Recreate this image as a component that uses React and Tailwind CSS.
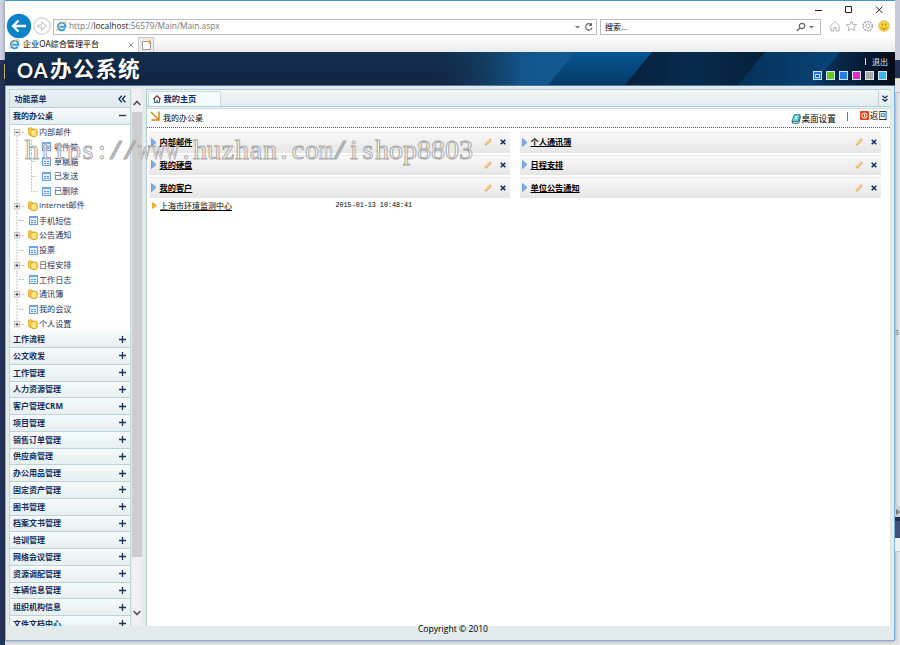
import React from "react";

const menus = [
  "工作流程", "公文收发", "工作管理", "人力资源管理", "客户管理CRM", "项目管理",
  "销售订单管理", "供应商管理", "办公用品管理", "固定资产管理", "图书管理",
  "档案文书管理", "培训管理", "网络会议管理", "资源调配管理", "车辆信息管理",
  "组织机构信息", "文件文档中心",
];

const tree = [
  { t: "内部邮件", k: "open" },
  { t: "收件箱", k: "child" },
  { t: "草稿箱", k: "child" },
  { t: "已发送", k: "child" },
  { t: "已删除", k: "child", last: true },
  { t: "Internet邮件", k: "folder" },
  { t: "手机短信", k: "leaf" },
  { t: "公告通知", k: "folder" },
  { t: "投票", k: "leaf" },
  { t: "日程安排", k: "folder" },
  { t: "工作日志", k: "leaf" },
  { t: "通讯簿", k: "folder" },
  { t: "我的会议", k: "leaf" },
  { t: "个人设置", k: "folder", last: true },
];

const IE = ({ className }) => (
  <svg className={className} viewBox="0 0 12 12">
    <path d="M9.700 8.200A4.200 4.200 0 1 1 10.300 6.300H3.600" fill="none" stroke="#2f9be0" strokeWidth="2" />
    <path d="M1.300 11.300C-.8 9.800 3.500 2.800 8.500.9c2.500-.8 3 .6 2.100 2.300" fill="none" stroke="#f0b63c" strokeWidth="1" />
  </svg>
);

const Folder = () => (
  <svg className="h-[10px] w-[10px] shrink-0" viewBox="0 0 10 10">
    <path d="M.5 1.200 3 .6l1.300 1.200 1.200.3V9.300L3 8.600.5 7.500z" fill="#f6cf4a" stroke="#d49b16" strokeWidth=".7" />
    <path d="M3 3l2-.8h3.200l1 .8v5.300l-1.200.9-2 .5L3 8.600z" fill="#ffdf63" stroke="#c9930f" strokeWidth=".8" />
    <path d="M4 3.600v4.600M6 3.300v5" stroke="#fff3b5" strokeWidth=".8" />
  </svg>
);

const Sheet = () => (
  <svg className="h-[9px] w-[9px] shrink-0" viewBox="0 0 9 9">
    <rect x=".5" y=".5" width="8" height="8" fill="#e8f2ff" stroke="#6a9fdf" />
    <path d="M0 1h9" stroke="#6aa5e6" strokeWidth="2" />
    <path d="M2 4.500h2M5 4.500h2M2 6.500h2M5 6.500h2" stroke="#5591d8" strokeWidth="1.100" />
  </svg>
);

function TreeRow({ item }) {
  const child = item.k === "child";
  return (
    <div className="flex h-[14.75px] items-center pl-[4px]">
      <svg className="h-[14.75px] w-[13px] shrink-0" viewBox="0 0 13 14.750">
        {!(item.k === "folder" && item.last) && (
          <path d={item.k === "open" ? "M3 8v7" : "M3 0v15"} stroke="#c4c4c4" strokeDasharray="2 1" />
        )}
        {item.k === "folder" && item.last && <path d="M3 0v7" stroke="#c4c4c4" strokeDasharray="2 1" />}
        {!child && <path d="M5 7.500h6" stroke="#c4c4c4" strokeDasharray="2 1" />}
        {(item.k === "folder" || item.k === "open") && (
          <g>
            <rect x="0.300" y="4.600" width="5.400" height="5.400" fill="#fff" stroke="#b5b5b5" strokeWidth=".8" />
            <path d={item.k === "folder" ? "M1.400 7.300h3.200M3 5.700v3.200" : "M1.400 7.300h3.200"} stroke="#222" strokeWidth=".9" />
          </g>
        )}
      </svg>
      {child && (
        <svg className="h-[14.75px] w-[15px] shrink-0" viewBox="0 0 15 14.750">
          <path d={item.last ? "M4.500 0v7.500h6" : "M4.500 0v15M4.500 7.500h6"} fill="none" stroke="#c4c4c4" strokeDasharray="2 1" />
        </svg>
      )}
      <span className={child ? "flex w-[12px]" : "flex w-[12px] justify-center"}>
        {item.k === "folder" || item.k === "open" ? <Folder /> : <Sheet />}
      </span>
      <span className="whitespace-nowrap text-[8.100px] leading-none text-[#1c3259]">
        {item.t.startsWith("Internet") ? <><span className="text-[7.900px]">Internet</span>邮件</> : item.t}
      </span>
    </div>
  );
}

function MenuHead({ label, open }) {
  return (
    <div className="flex h-[16.75px] shrink-0 items-center justify-between border-b border-[#b9d3da] bg-gradient-to-b from-[#f6fafa] to-[#e8eff0] pr-[4px] pl-[3px]">
      <span className="text-[8px] leading-none font-bold text-[#15305c]">{label}</span>
      <svg className="h-[7px] w-[7px]" viewBox="0 0 7 7">
        <path d={open ? "M0 3.500h7" : "M0 3.500h7M3.500 0v7"} stroke="#16315c" strokeWidth="1.300" />
      </svg>
    </div>
  );
}

function Panel({ title }) {
  return (
    <div className="flex h-[20.500px] items-center border-t border-[#e9e9e9] bg-gradient-to-b from-[#f9f9f9] to-[#e6e6e6] pr-[4.500px] pb-[1px] pl-[2px]">
      <svg className="h-[9px] w-[6px]" viewBox="0 0 6 9">
        <path d="M.5.5 5 4.500.5 8.500z" fill="#79abee" stroke="#5a8cd4" strokeWidth=".7" />
      </svg>
      <span className="ml-[2.500px] text-[8.200px] leading-none font-bold text-black underline">{title}</span>
      <svg className="ml-auto h-[8px] w-[8px]" viewBox="0 0 8 8">
        <path d="M1.200 6.800 6.500 1.500" stroke="#dfa548" strokeWidth="2.500" />
        <path d="M1.300 6.200 6 1.500" stroke="#ffe3a0" strokeWidth="1.200" />
        <path d="M6 .9l1.300 1.300" stroke="#e8a59a" strokeWidth="1.200" />
      </svg>
      <svg className="ml-[8px] h-[6px] w-[6px]" viewBox="0 0 6 6">
        <path d="M.7.7l4.600 4.600M5.300.7.7 5.300" stroke="#14305f" strokeWidth="1.600" />
      </svg>
    </div>
  );
}

function Watermark() {
  return (
    <div className="pointer-events-none absolute top-[134px] left-[25px] flex font-['Liberation_Serif',serif] text-[28px] leading-[32px] text-white/75 [-webkit-text-stroke:1px_#a9a9a9]">
      {"https://www.huzhan.com/ishop8803".split("").map((c, i) => (
        <span key={i} className="flex w-[14px] justify-center">
          <span className={c === "w" || c === "m" ? "scale-x-[0.66]" : c === "/" ? "scale-x-[1.5]" : ""}>{c}</span>
        </span>
      ))}
    </div>
  );
}

function Chrome() {
  return (
    <div className="flex h-[51px] flex-col bg-gradient-to-b from-white from-70% to-[#ebebeb]">
      <div className="flex h-[17px] items-center justify-end pr-[11px]">
        <svg className="h-[9px] w-[70px]" viewBox="0 0 70 9" fill="none" stroke="#222">
          <path d="M1 5.500h7M31.500 1.500h6v6h-6zM62 1.500l6.500 6.500M68.500 1.500 62 8" />
        </svg>
      </div>
      <div className="flex h-[17px] items-center">
        <svg className="z-10 -mt-[2px] h-[26px] w-[47px] shrink-0" viewBox="0 0 47 26">
          <circle cx="14" cy="13" r="12.200" fill="#0b82c8" />
          <path d="M21 13H8M13.500 7.500 8 13l5.500 5.500" fill="none" stroke="#fff" strokeWidth="2.300" />
          <circle cx="37" cy="13" r="8.200" fill="#fff" stroke="#c3c3c3" />
          <path d="M32.500 12h4V9l5 4-5 4v-3h-4z" fill="#fff" stroke="#bdbdbd" />
        </svg>
        <div className="ml-[1px] flex h-[16px] w-[544px] items-center border border-[#bcbcbc] bg-white px-[2px]">
          <IE className="h-[11px] w-[11px]" />
          <span className="ml-[2px] font-['Open_Sans',sans-serif] text-[8.350px] leading-none text-[#777]">
            http://<span className="text-[#222]">localhost</span>:56579/Main/Main.aspx
          </span>
          <svg className="ml-auto h-[10px] w-[20px]" viewBox="0 0 20 10">
            <path d="M1 4h5L3.500 6.500z" fill="#777" />
            <path d="M17 2.500a3.200 3.200 0 1 0 1 3" fill="none" stroke="#666" strokeWidth="1.200" />
            <path d="M18 .5v3.500h-3.500z" fill="#666" />
          </svg>
        </div>
        <div className="ml-[3px] flex h-[16px] w-[221px] items-center border border-[#bcbcbc] bg-white px-[4px]">
          <span className="text-[8px] leading-none text-black">搜索...</span>
          <svg className="ml-auto h-[10px] w-[20px]" viewBox="0 0 20 10">
            <circle cx="6" cy="4" r="2.700" fill="none" stroke="#666" strokeWidth="1.200" />
            <path d="M4 6 .8 9" stroke="#666" strokeWidth="1.400" />
            <path d="M13 4h5l-2.500 2.500z" fill="#777" />
          </svg>
        </div>
        <svg className="ml-[8px] h-[12px] w-[62px] -translate-y-[1px]" viewBox="0 0 62 12" fill="none" stroke="#a9a9a9" strokeWidth=".9">
          <path d="M1 6.500 6 1.500l5 5-1 .8V11H7.200V7.500H4.800V11H2V7.300z" />
          <path d="M22.500 1l1.500 3.400 3.800.3-2.900 2.500.9 3.600-3.300-2-3.300 2 .9-3.600-2.900-2.500 3.800-.3z" />
          <circle cx="38.700" cy="6" r="4.600" strokeDasharray="2 .9" strokeWidth="1.500" />
          <circle cx="38.700" cy="6" r="2" />
          <circle cx="55" cy="6" r="5.300" fill="#f9d342" stroke="#d6a625" strokeWidth=".6" />
          <path d="M53.300 3.700v1.800M56.700 3.700v1.800M52 7.500c1.500 2 4.500 2 6 0" stroke="#8a6510" />
        </svg>
      </div>
      <div className="mt-auto flex h-[15px]">
        <div className="flex w-[134px] items-center border-r border-[#c8c8c8] bg-white pr-[4px] pl-[4px]">
          <IE className="h-[11px] w-[11px]" />
          <span className="ml-[3px] text-[8.100px] leading-none text-black">企业OA综合管理平台</span>
          <svg className="ml-auto h-[6px] w-[6px]" viewBox="0 0 6 6">
            <path d="M.5.5l5 5M5.500.5l-5 5" stroke="#999" />
          </svg>
        </div>
        <div className="flex w-[15px] items-center justify-center border-t border-r border-[#c8c8c8] bg-[#ececec]">
          <svg className="h-[12px] w-[11px]" viewBox="0 0 11 12">
            <path d="M1.500 2.500h8v8h-8z" fill="#fff" stroke="#999" />
            <path d="M8.300 0l.8 2 1.900.8-1.900.8-.8 2-.8-2-2-.8 2-.8z" fill="#f6a33c" />
          </svg>
        </div>
      </div>
    </div>
  );
}

const swatches = ["bg-[#2678d8]", "bg-[#5fcb1d]", "bg-[#1f7cea]", "bg-[#de2cc6]", "bg-[#aaaaaa]", "bg-[#39b2f6]"];

function Banner() {
  return (
    <div className="relative flex h-[34px] shrink-0 justify-between overflow-hidden border-b border-[#53789d] bg-gradient-to-b from-[#12304f] to-[#122442]">
      <svg className="absolute inset-0 h-full w-full" viewBox="0 0 890 33" preserveAspectRatio="none">
        <defs>
          <linearGradient id="a" x1="0" x2="1">
            <stop offset="0" stopColor="#12304f" stopOpacity="0" />
            <stop offset=".6" stopColor="#12568c" />
            <stop offset="1" stopColor="#125a93" />
          </linearGradient>
          <linearGradient id="b" x1="0" x2="0" y1="0" y2="1">
            <stop offset="0" stopColor="#075493" />
            <stop offset="1" stopColor="#063a67" />
          </linearGradient>
          <linearGradient id="c" x1="0" x2="1">
            <stop offset="0" stopColor="#08213c" />
            <stop offset=".5" stopColor="#072b4d" />
            <stop offset="1" stopColor="#071e37" />
          </linearGradient>
          <linearGradient id="d" x1="0" x2="1">
            <stop offset="0" stopColor="#063158" />
            <stop offset="1" stopColor="#07457a" />
          </linearGradient>
          <linearGradient id="e" x1="0" x2="1">
            <stop offset="0" stopColor="#093661" />
            <stop offset="1" stopColor="#040b18" />
          </linearGradient>
        </defs>
        <path d="M445 0H580L550 33H425z" fill="url(#a)" />
        <path d="M570 0H660L625 33H543z" fill="url(#b)" />
        <path d="M647 0H762L735 33H620z" fill="url(#c)" />
        <path d="M760 0H840L810 33H733z" fill="url(#d)" />
        <path d="M835 0H890V33H808z" fill="url(#e)" />
      </svg>
      <div className="relative flex items-center pt-[1px] pl-[12px] text-white [text-shadow:1px_1px_1px_#0008]">
        <span className="w-[33px] pt-[2px] font-['Lato',sans-serif] text-[20px] leading-none font-bold tracking-[1px]">OA</span>
        <span className="text-[21.700px] leading-none font-bold tracking-[1px]">办公系统</span>
      </div>
      <div className="relative flex flex-col items-end pt-[5px] pr-[7px]">
        <div className="flex items-center gap-[6px] text-[8px] leading-[9px] text-[#dbe6f0]">
          <span className="h-[7px] w-px bg-[#dbe6f0]" />
          <span>退出</span>
        </div>
        <div className="mt-[5px] flex gap-[4px] pr-[1px]">
          {swatches.map((s, i) => (
            <div key={s} className={"flex h-[9px] w-[9px] items-center justify-center border border-[#dce5ea] " + s}>
              {i === 0 && <span className="h-[4px] w-[5px] border border-[#b8d6f6] bg-[#1b55ad]" />}
            </div>
          ))}
        </div>
      </div>
    </div>
  );
}

function Sidebar() {
  return (
    <div className="flex h-[537px] w-[133px] shrink-0">
      <div className="flex w-[122px] flex-col overflow-hidden border-x border-t border-[#bdd5dc] bg-white">
        <div className="flex h-[18px] shrink-0 items-center justify-between border-b border-[#b9d3da] bg-gradient-to-b from-[#eaf1f2] to-[#dfe9ec] pr-[4px] pl-[4.500px]">
          <span className="text-[8px] leading-none font-bold text-[#15305c]">功能菜单</span>
          <svg className="h-[8px] w-[8px]" viewBox="0 0 8 8">
            <path d="M3.800.7.9 4l2.900 3.300M7.300.7 4.400 4l2.900 3.300" fill="none" stroke="#16315c" strokeWidth="1.300" />
          </svg>
        </div>
        <MenuHead label="我的办公桌" open />
        <div className="flex shrink-0 flex-col">
          {tree.map((t) => <TreeRow key={t.t} item={t} />)}
        </div>
        {menus.map((m) => <MenuHead key={m} label={m} />)}
      </div>
      <div className="ml-[1px] flex w-[10px] flex-col items-center bg-[#f0f0f0] pt-[11px] pb-[10px]">
        <svg className="h-[6px] w-[8px] shrink-0" viewBox="0 0 8 6">
          <path d="M.7 5 4 1.500 7.300 5" fill="none" stroke="#555" strokeWidth="1.700" />
        </svg>
        <div className="mt-[6px] h-[445px] w-full shrink-0 bg-[#cdcdcd]" />
        <svg className="mt-auto h-[6px] w-[8px] shrink-0" viewBox="0 0 8 6">
          <path d="M.7 1 4 4.500 7.300 1" fill="none" stroke="#555" strokeWidth="1.700" />
        </svg>
      </div>
    </div>
  );
}

function Main() {
  return (
    <div className="ml-[4px] flex h-[537px] w-[745px] shrink-0 flex-col border-t border-r border-l border-[#b0cdd6] border-r-[#dbe5e8] bg-white">
      <div className="flex h-[17px] shrink-0 justify-between border-b border-[#b0cdd6] bg-gradient-to-b from-[#f1f6f6] to-[#e4ecee] pt-px pl-[1px]">
        <div className="flex w-[73px] items-center gap-[2.500px] rounded-t-[2px] border-x border-t border-[#c4dce1] bg-[#f5fafb] pl-[4px]">
          <svg className="h-[8px] w-[8px]" viewBox="0 0 8 8">
            <path d="M1.500 4v3.500h5V4" fill="#fff" stroke="#28529a" />
            <path d="M.4 4.200 4 .8l3.600 3.400" fill="none" stroke="#8c2731" strokeWidth="1.200" />
            <path d="M4 5v3" stroke="#3a73c2" strokeWidth="1.500" />
          </svg>
          <span className="text-[8.200px] leading-none font-bold text-[#15305c]">我的主页</span>
        </div>
        <div className="flex w-[12px] items-center justify-center border-l border-[#b9d3da]">
          <svg className="h-[7px] w-[6px]" viewBox="0 0 6 7">
            <path d="M.5.700 3 2.900 5.500.7M.5 3.900 3 6.100l2.500-2.200" fill="none" stroke="#16315c" strokeWidth="1.300" />
          </svg>
        </div>
      </div>
      <div className="h-[2px] shrink-0 border-b border-[#c7dbe0] bg-[#edf3f4]" />
      <div className="flex h-[19px] shrink-0 border-b border-dotted border-[#267a50] pr-[3px] pl-[3px] text-[8px] leading-none text-black">
        <svg className="mt-[2px] h-[10px] w-[10px]" viewBox="0 0 10 10">
          <path d="M1 1 8 8M9 .5V9H1.500" fill="none" stroke="#d97f10" strokeWidth="1.400" />
        </svg>
        <span className="mt-[5px] ml-[3px]">我的办公桌</span>
        <svg className="mt-[5px] ml-auto h-[10px] w-[10px]" viewBox="0 0 10 10">
          <path d="M3.200.7h6L7 7.500H1z" fill="#65d9e3" stroke="#15656f" strokeWidth=".8" />
          <path d="M1 7.500l.8 1.700h6l1.700-7" fill="none" stroke="#15656f" />
          <path d="M4.500 2.500h2M4 4.500h2" stroke="#fff" />
        </svg>
        <span className="mt-[6px] text-[8.600px]">桌面设置</span>
        <span className="mt-[3px] ml-[11px] h-[9px] w-px bg-[#777]" />
        <svg className="mt-[2px] ml-[12px] h-[9px] w-[9px]" viewBox="0 0 9 9">
          <rect width="9" height="9" rx="1" fill="#e54120" />
          <circle cx="4.500" cy="4.600" r="2.600" fill="none" stroke="#fff" strokeWidth=".9" />
          <path d="M4.500 3v3" stroke="#fff" />
        </svg>
        <span className="mt-[3px] ml-[1px] text-[8.600px]">返回</span>
      </div>
      <div className="flex gap-[10px] pt-[4px] pl-[2px]">
        <div className="flex w-[361px] flex-col gap-[2.200px]">
          <Panel title="内部邮件" />
          <Panel title="我的硬盘" />
          <Panel title="我的客户" />
          <div className="flex h-[11px] items-center pl-[3px]">
            <svg className="h-[7px] w-[5px]" viewBox="0 0 5 7">
              <path d="M.5.5 4.500 3.500.5 6.500z" fill="#ffae13" stroke="#ec930c" strokeWidth=".6" />
            </svg>
            <span className="ml-[3px] w-[175.500px] text-[8px] leading-none text-black underline">上海市环境监测中心</span>
            <span className="font-['Liberation_Mono',monospace] text-[6.720px] leading-none text-black">2015-01-13 10:48:41</span>
          </div>
        </div>
        <div className="flex w-[361px] flex-col gap-[2.200px]">
          <Panel title="个人通讯簿" />
          <Panel title="日程安排" />
          <Panel title="单位公告通知" />
        </div>
      </div>
    </div>
  );
}

export default function App() {
  return (
    <div className="relative flex h-[645px] w-[900px] overflow-hidden bg-[#e7e7e9] font-['Open_Sans','Noto_Sans_CJK_SC',sans-serif]">
      <div className="flex w-[5px] flex-col">
        <div className="h-[60px] bg-[#cdd3e2]" />
        <div className="h-[4px] bg-[#24345a]" />
        <div className="h-[15px] w-full border-r border-[#d9d48a] bg-[#22304f]" />
        <div className="flex-1 bg-[#24345a]" />
      </div>
      <div className="flex h-[641px] w-[890px] flex-col border-t border-[#3d94da] bg-[#e3ebed] shadow-[0_0_4px_#0006]">
        <Chrome />
        <Banner />
        <div className="flex h-[540px] shrink-0 border-x border-[#83b0d8] pt-[3px] pl-[3px]">
          <Sidebar />
          <Main />
        </div>
        <div className="flex flex-1 items-start justify-center border-x border-b border-[#83b0d8] pl-[6px]">
          <span className="-mt-[1px] font-['Open_Sans',sans-serif] text-[8.600px] leading-[9px] text-black">Copyright © 2010</span>
        </div>
      </div>
      <div className="flex w-[5px] flex-col overflow-hidden">
        <div className="h-[60px] bg-[#c9c9d8]" />
        <div className="h-[18px] bg-[#243252]" />
        <div className="h-[15px] border-t border-b border-t-[#d9d48a] border-b-[#b9bac8] bg-[#e7e7e9]" />
        <div className="h-[234px]" />
        <div className="h-[12px] text-[9px] leading-[10px] text-[#777]">s</div>
        <div className="h-[167px]" />
        <div className="flex h-[11px] items-center justify-center bg-[#cfcfd3]">
          <svg className="h-[6px] w-[4px]" viewBox="0 0 4 6">
            <path d="M0 0 4 3 0 6z" fill="#777" />
          </svg>
        </div>
        <div className="h-[21px] border-t-4 border-[#243252] bg-[#40517c]" />
        <div className="h-[14px] border-b border-[#c8c8c8] bg-[#f0f0f0]" />
      </div>
      <Watermark />
    </div>
  );
}
